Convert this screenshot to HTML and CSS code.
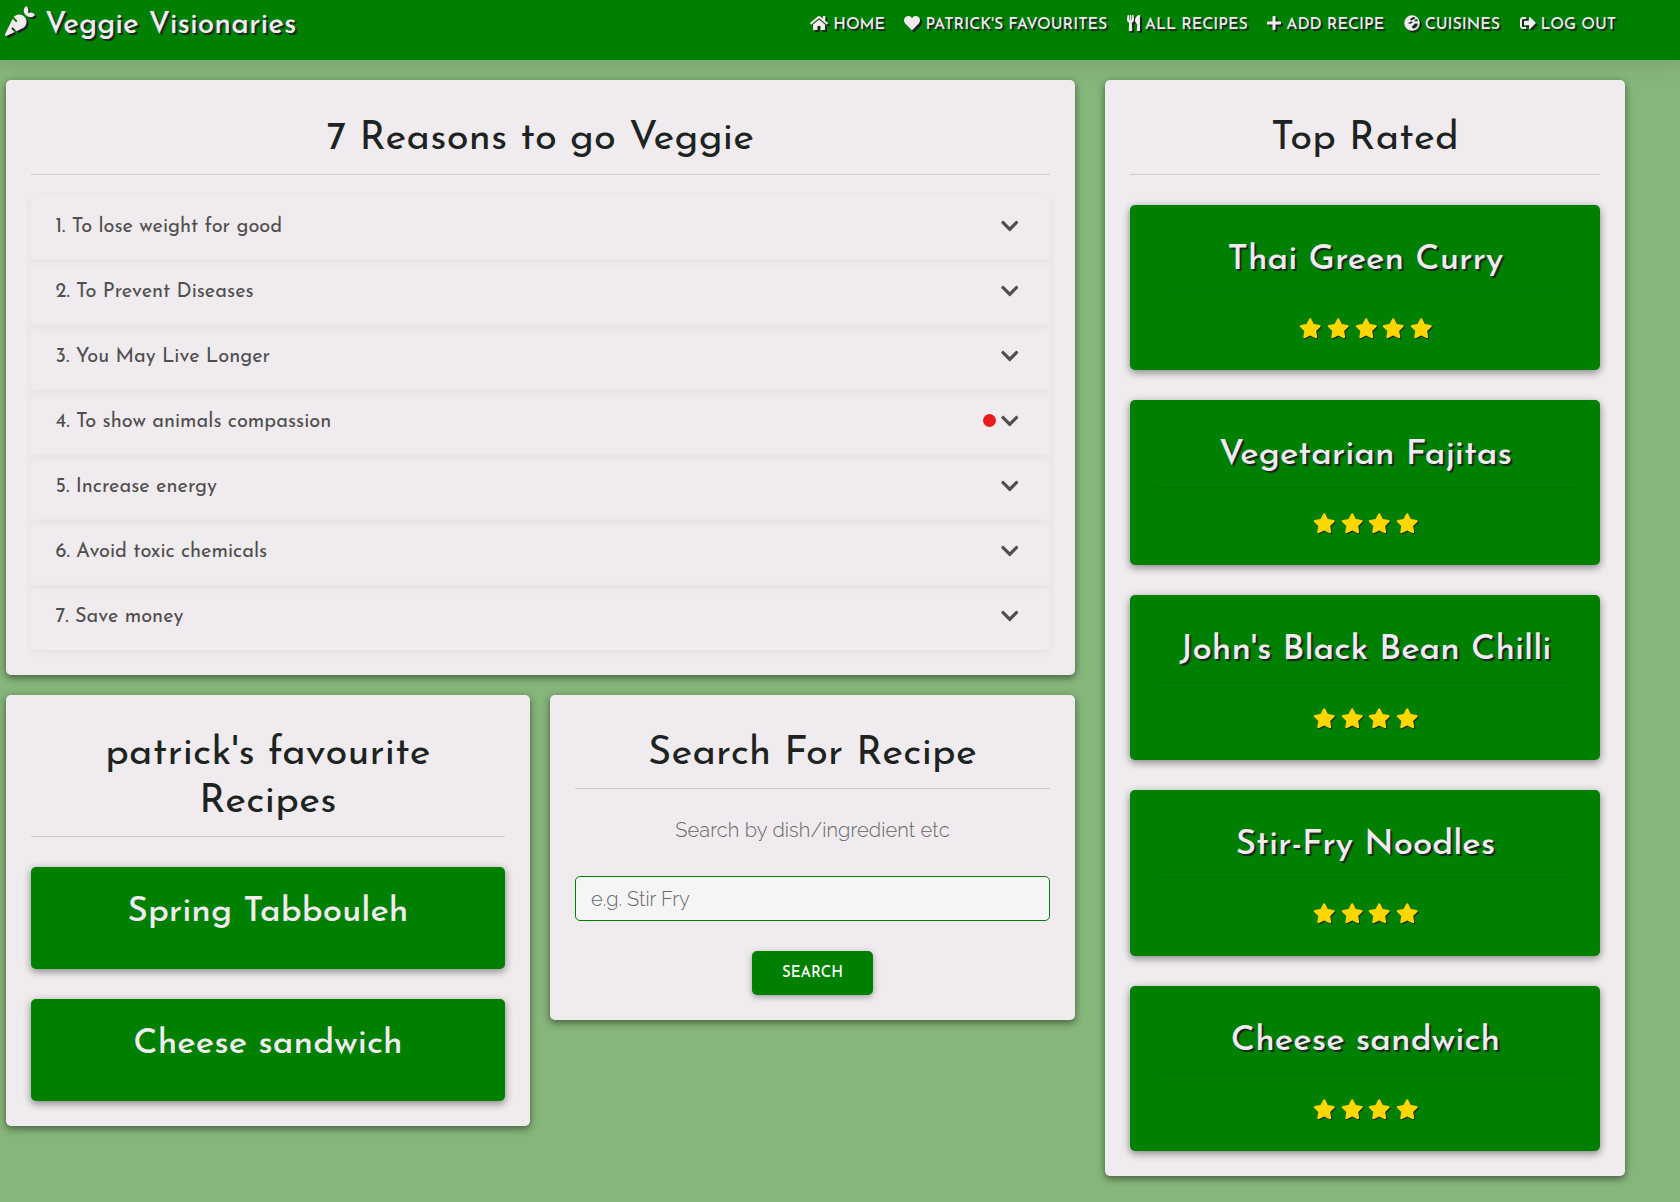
FILE: index.html
```html
<!DOCTYPE html>
<html lang="en">
<head>
<meta charset="utf-8">
<title>Veggie Visionaries</title>
<link rel="stylesheet" href="styles.css">
</head>
<body>
<svg class="sprite" aria-hidden="true">
  <symbol id="carrot" viewBox="0 0 512 512"><path d="M298.2 156.6c-52.7-25.7-114.5-10.5-150.2 32.8l55.2 55.2c6.3 6.3 6.3 16.4 0 22.6-3.1 3.1-7.2 4.7-11.3 4.7s-8.2-1.6-11.3-4.7L130.4 217 2.3 479.7c-2.9 6-3.1 13.3 0 19.7 5.4 11.1 18.9 15.7 30 10.3l133.6-65.2-49.2-49.2c-6.2-6.2-6.2-16.4 0-22.6 6.3-6.2 16.4-6.2 22.6 0l57 57 102-49.8c24-11.7 44.5-31.3 57.1-57.1 30.1-61.7 4.5-136.1-57.2-166.2zm92.1-34.9C409.8 81 399.7 32.9 360 0c-50.3 41.7-52.5 107.5-7.9 151.9l8 8c44.4 44.6 110.3 42.4 151.9-7.9-32.9-39.7-81-49.8-121.7-30.3z"/></symbol>
  <symbol id="home" viewBox="0 0 576 512"><path d="M280.37 148.26L96 300.11V464a16 16 0 0 0 16 16l112.06-.29a16 16 0 0 0 15.92-16V368a16 16 0 0 1 16-16h64a16 16 0 0 1 16 16v95.64a16 16 0 0 0 16 16.05L464 480a16 16 0 0 0 16-16V300L295.67 148.26a12.19 12.19 0 0 0-15.3 0zM571.6 251.47L488 182.56V44.05a12 12 0 0 0-12-12h-56a12 12 0 0 0-12 12v72.61L318.47 43a48 48 0 0 0-61 0L4.34 251.47a12 12 0 0 0-1.6 16.9l25.5 31A12 12 0 0 0 45.15 301l235.22-193.74a12.19 12.19 0 0 1 15.3 0L530.9 301a12 12 0 0 0 16.9-1.6l25.5-31a12 12 0 0 0-1.7-16.93z"/></symbol>
  <symbol id="heart" viewBox="0 0 512 512"><path d="M462.3 62.6C407.5 15.9 326 24.3 275.7 76.2L256 96.5l-19.7-20.3C186.1 24.3 104.5 15.9 49.7 62.6c-62.8 53.6-66.1 149.8-9.9 207.9l193.5 199.8c12.5 12.9 32.8 12.9 45.3 0l193.5-199.8c56.3-58.1 53-154.3-9.8-207.9z"/></symbol>
  <symbol id="utensils" viewBox="0 0 416 512"><path d="M207.9 15.2c.8 4.7 16.1 94.5 16.1 128.8 0 52.3-27.8 89.6-68.9 104.6L168 486.7c.7 13.7-10.2 25.3-24 25.3H80c-13.7 0-24.7-11.5-24-25.3l12.9-238.1C27.7 233.6 0 196.2 0 144 0 109.6 15.3 19.9 16.1 15.2 19.3-5.1 61.4-5.4 64 16.3v141.2c1.3 3.4 15.1 3.2 16 0 1.4-25.3 7.9-139.2 8-141.8 3.3-20.8 44.7-20.8 47.9 0 .2 2.7 6.6 116.5 8 141.8.9 3.2 14.8 3.4 16 0V16.3c2.6-21.6 44.8-21.4 48-1.1zm119.2 285.7l-15 185.1c-1.2 14 9.9 26 23.9 26h56c13.3 0 24-10.7 24-24V24c0-13.2-10.7-24-24-24-82.5 0-221.4 178.5-64.9 300.9z"/></symbol>
  <symbol id="plus" viewBox="0 0 448 512"><path d="M416 208H272V64c0-17.67-14.33-32-32-32h-32c-17.67 0-32 14.33-32 32v144H32c-17.67 0-32 14.33-32 32v32c0 17.67 14.33 32 32 32h144v144c0 17.67 14.33 32 32 32h32c17.67 0 32-14.33 32-32V304h144c17.67 0 32-14.33 32-32v-32c0-17.67-14.33-32-32-32z"/></symbol>
  <symbol id="globe" viewBox="0 0 496 512"><path fill-rule="evenodd" d="M248 8a248 248 0 1 0 0 496a248 248 0 1 0 0-496zM240 90l70-26 50 20-40 44-60 30-50 10-30-30zM330 150l80-20 30 60-70 14-60-14zM150 240l80-30 50 14-40 40-70 14-40-10zM270 340l70-70 80 0 10 50-40 70-60 40-60-10-30-40z"/></symbol>
  <symbol id="logout" viewBox="0 0 512 512"><path d="M497 273L329 441c-15 15-41 4.5-41-17v-96H152c-13.3 0-24-10.7-24-24v-96c0-13.3 10.7-24 24-24h136V88c0-21.4 25.9-32 41-17l168 168c9.3 9.4 9.3 24.6 0 34zM192 436v-40c0-6.6-5.4-12-12-12H96c-17.7 0-32-14.3-32-32V160c0-17.7 14.3-32 32-32h84c6.6 0 12-5.4 12-12V76c0-6.6-5.4-12-12-12H96c-53 0-96 43-96 96v192c0 53 43 96 96 96h84c6.6 0 12-5.4 12-12z"/></symbol>
  <symbol id="chevron" viewBox="0 0 448 512"><path d="M207.029 381.476L12.686 187.132c-9.373-9.373-9.373-24.569 0-33.941l22.667-22.667c9.357-9.357 24.522-9.375 33.901-.04L224 284.505l154.745-154.021c9.379-9.335 24.544-9.317 33.901.04l22.667 22.667c9.373 9.373 9.373 24.569 0 33.941L240.971 381.476c-9.373 9.372-24.569 9.372-33.942 0z"/></symbol>
  <symbol id="star" viewBox="0 0 576 512"><path d="M259.3 17.8L194 150.2 47.9 171.5c-26.2 3.8-36.7 36.1-17.7 54.6l105.7 103-25 145.5c-4.5 26.3 23.2 46 46.4 33.7L288 439.6l130.7 68.7c23.2 12.2 50.9-7.4 46.4-33.7l-25-145.5 105.7-103c19-18.5 8.5-50.8-17.7-54.6L382 150.2 316.7 17.8c-11.7-23.6-45.6-23.9-57.4 0z"/></symbol>
</svg>

<header class="navbar">
  <a class="brand"><svg class="brand-icon"><use href="#carrot"/></svg><span>Veggie Visionaries</span></a>
  <nav class="nav">
    <a class="nav-link"><svg class="i-home"><use href="#home"/></svg><span>HOME</span></a>
    <a class="nav-link"><svg class="i-heart"><use href="#heart"/></svg><span>PATRICK'S FAVOURITES</span></a>
    <a class="nav-link"><svg class="i-utensils"><use href="#utensils"/></svg><span>ALL RECIPES</span></a>
    <a class="nav-link"><svg class="i-plus"><use href="#plus"/></svg><span>ADD RECIPE</span></a>
    <a class="nav-link"><svg class="i-globe"><use href="#globe"/></svg><span>CUISINES</span></a>
    <a class="nav-link"><svg class="i-logout"><use href="#logout"/></svg><span>LOG OUT</span></a>
  </nav>
</header>

<main class="layout">
  <div class="left">
    <section class="card">
      <h2>7 Reasons to go Veggie</h2>
      <ul class="reasons">
        <li>1. To lose weight for good<svg><use href="#chevron"/></svg></li>
        <li>2. To Prevent Diseases<svg><use href="#chevron"/></svg></li>
        <li>3. You May Live Longer<svg><use href="#chevron"/></svg></li>
        <li>4. To show animals compassion<i class="dot"></i><svg><use href="#chevron"/></svg></li>
        <li>5. Increase energy<svg><use href="#chevron"/></svg></li>
        <li>6. Avoid toxic chemicals<svg><use href="#chevron"/></svg></li>
        <li>7. Save money<svg><use href="#chevron"/></svg></li>
      </ul>
    </section>
    <div class="row">
      <section class="card">
        <h2>patrick's favourite Recipes</h2>
        <div class="stack">
          <a class="favourite">Spring Tabbouleh</a>
          <a class="favourite">Cheese sandwich</a>
        </div>
      </section>
      <section class="card">
        <h2>Search For Recipe</h2>
        <form class="search">
          <label for="q">Search by dish/ingredient etc</label>
          <input id="q" type="text" placeholder="e.g. Stir Fry">
          <button type="button">SEARCH</button>
        </form>
      </section>
    </div>
  </div>
  <aside class="card top-rated">
    <h2>Top Rated</h2>
    <div class="stack">
      <article class="recipe"><h3>Thai Green Curry</h3><div class="stars"><svg><use href="#star"/></svg><svg><use href="#star"/></svg><svg><use href="#star"/></svg><svg><use href="#star"/></svg><svg><use href="#star"/></svg></div></article>
      <article class="recipe"><h3>Vegetarian Fajitas</h3><div class="stars"><svg><use href="#star"/></svg><svg><use href="#star"/></svg><svg><use href="#star"/></svg><svg><use href="#star"/></svg></div></article>
      <article class="recipe"><h3>John's Black Bean Chilli</h3><div class="stars"><svg><use href="#star"/></svg><svg><use href="#star"/></svg><svg><use href="#star"/></svg><svg><use href="#star"/></svg></div></article>
      <article class="recipe"><h3>Stir-Fry Noodles</h3><div class="stars"><svg><use href="#star"/></svg><svg><use href="#star"/></svg><svg><use href="#star"/></svg><svg><use href="#star"/></svg></div></article>
      <article class="recipe"><h3>Cheese sandwich</h3><div class="stars"><svg><use href="#star"/></svg><svg><use href="#star"/></svg><svg><use href="#star"/></svg><svg><use href="#star"/></svg></div></article>
    </div>
  </aside>
</main>
</body>
</html>
```
FILE: styles.css
```css
* { box-sizing: border-box; }

body {
  margin: 0;
  min-height: 1202px;
  background: #87b67b;
  color: #1c2321;
  font-family: "Josefin Sans", Lato, sans-serif;
}

.sprite { display: none; }
svg { fill: currentColor; flex: none; overflow: visible; }

/* navigation */
.navbar {
  display: flex;
  justify-content: space-between;
  height: 60px;
  padding: 0 64px 0 5px;
  background: #008000;
  color: #efebee;
  box-shadow: 0 5px 11px rgba(0, 0, 0, .04), 0 8px 25px rgba(0, 0, 0, .05);
}
.brand {
  display: flex;
  gap: 10px;
  height: 48px;
  font-size: 30px;
  font-weight: 500;
  line-height: 52px;
  text-shadow: 2px 2px 1px #1c2321;
}
.brand-icon {
  width: 30px;
  height: 30px;
  margin-top: 6px;
  filter: drop-shadow(2px 2px .5px #1c2321);
}
.nav { display: flex; gap: 19.5px; height: 50px; }
.nav-link {
  display: flex;
  align-items: center;
  gap: 5px;
  font-size: 16px;
  font-weight: 500;
  line-height: 50px;
  text-shadow: 2px 2px 1px #1c2321;
}
.nav-link svg { height: 16px; margin-top: -4px; filter: drop-shadow(2px 2px .5px #1c2321); }
.i-home { width: 18px; }
.i-heart, .i-globe, .i-logout { width: 16px; }
.i-plus { width: 14px; }
.i-utensils { width: 13px; }

/* cards */
.layout {
  display: flex;
  align-items: flex-start;
  gap: 30px;
  padding: 20px 55px 26px 6px;
}
.left { display: flex; flex-direction: column; gap: 20px; width: 1069px; }
.row { display: grid; grid-template-columns: 524px 525px; gap: 20px; align-items: start; }
.card {
  padding: 35px 25px 25px;
  border-radius: 5px;
  background: #efebee;
  box-shadow: 0 3px 6px rgba(0, 0, 0, .28), 0 2px 10px rgba(0, 0, 0, .26);
}
.top-rated { flex: 1; }
h2 {
  margin: 0;
  padding-bottom: 11px;
  border-bottom: 1px solid #cdc9cc;
  font-size: 40px;
  font-weight: 400;
  letter-spacing: .23px;
  line-height: 48px;
  text-align: center;
}
.row h2 { padding-bottom: 10px; }
.stack { display: flex; flex-direction: column; gap: 30.05px; margin-top: 30px; }

/* accordion */
.reasons { margin: 20px 0 0; padding: 0; list-style: none; }
.reasons li {
  display: flex;
  align-items: center;
  height: 65px;
  padding: 0 32px 2px 24.5px;
  color: #4f4f4f;
  font-size: 20px;
  box-shadow: 0 3px 8px rgba(0, 0, 0, .03), 0 2px 12px rgba(0, 0, 0, .025);
}
.reasons svg { width: 17.5px; height: 20px; margin: -1px 0 0 auto; }
.reasons .dot {
  width: 13px;
  height: 13px;
  margin: -2px 5px 0 auto;
  border-radius: 50%;
  background: #e81c1c;
}
.reasons .dot + svg { margin-left: 0; }

/* recipe tiles */
.favourite, .recipe {
  border-radius: 5px;
  background: #008000;
  color: #efebee;
  font-size: 35px;
  font-weight: 500;
  line-height: 43px;
  text-align: center;
  box-shadow: 0 3px 7px rgba(0, 0, 0, .25), 0 2px 10px rgba(0, 0, 0, .22);
}
.favourite { height: 102px; padding-top: 24px; }
.recipe { height: 165.1px; padding: 34px 25px 0; }
.recipe h3 {
  margin: 0;
  padding-bottom: 10px;
  border-bottom: 1px solid rgba(0, 0, 0, .1);
  font: inherit;
  text-indent: 1px;
  text-shadow: 2px 2px 1px #1c2321;
}
.stars {
  display: flex;
  justify-content: center;
  gap: 5.2px;
  margin-top: 25px;
  padding-left: 1.5px;
  color: gold;
}
.stars svg { width: 22.5px; height: 20.5px; filter: drop-shadow(1px 1px .5px #1c2321); }

/* search */
.search {
  display: flex;
  flex-direction: column;
  align-items: center;
  font-family: Raleway, Lato, sans-serif;
  font-size: 20px;
  font-weight: 300;
}
.search label {
  margin-top: 26px;
  color: #666;
  letter-spacing: .13px;
  line-height: 30px;
}
.search input {
  width: 100%;
  height: 45px;
  margin-top: 31px;
  padding: 0 15px;
  border: 1px solid #008000;
  border-radius: 5px;
  background: #f5f5f5;
  font: inherit;
}
.search input::placeholder { color: #666; opacity: 1; }
.search button {
  width: 121px;
  height: 44px;
  margin-top: 30px;
  padding: 0;
  border: 0;
  border-radius: 5px;
  background: #008000;
  color: #fff;
  font: 500 15px "Josefin Sans", Lato, sans-serif;
  box-shadow: 0 2px 5px rgba(0, 0, 0, .2), 0 2px 10px rgba(0, 0, 0, .15);
}
```
